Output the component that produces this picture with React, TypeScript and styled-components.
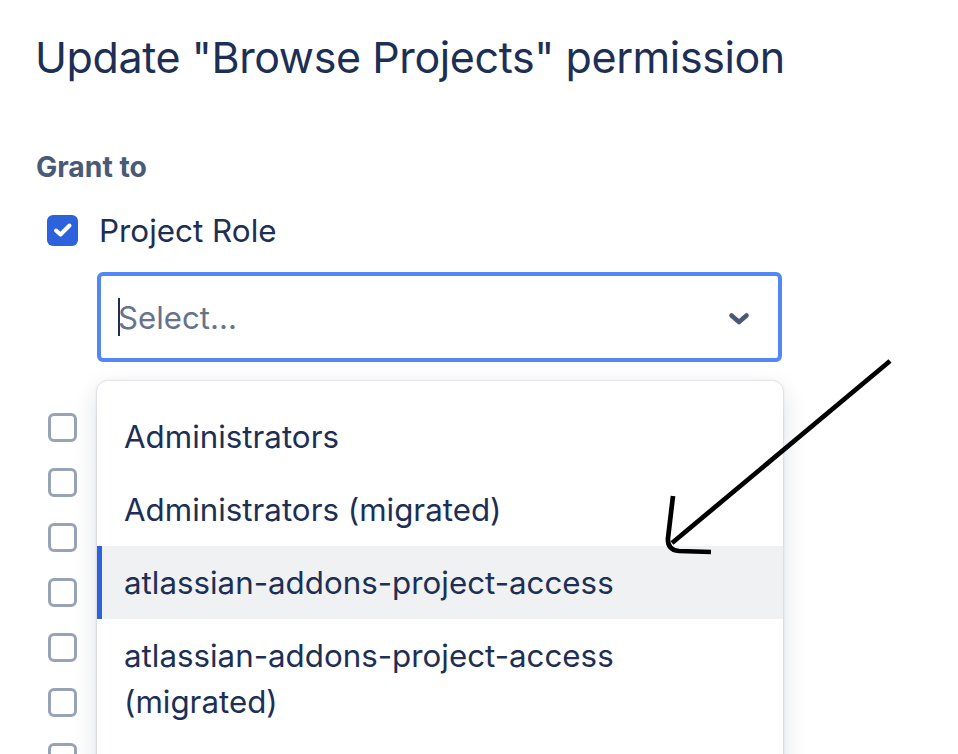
import styled, { createGlobalStyle } from "styled-components";

const GlobalStyle = createGlobalStyle`
  html, body {
    margin: 0;
    padding: 0;
    background: #fff;
  }
`;

const roles = [
  { name: "Administrators" },
  { name: "Administrators (migrated)" },
  { name: "atlassian-addons-project-access", active: true },
  { name: "atlassian-addons-project-access (migrated)" },
];

const uncheckedRows = [0, 1, 2, 3, 4, 5, 6];

export default function App() {
  return (
    <>
      <GlobalStyle />
      <Page>
        <Title>Update "Browse Projects" permission</Title>
        <Label>Grant to</Label>
        <CheckRow>
          <CheckedBox>
            <svg width="20" height="16" viewBox="0 0 20 16" fill="none">
              <path d="M3 8.5 L7.5 12.5 L16.5 3.5" stroke="#fff" strokeWidth="4" strokeLinecap="round" strokeLinejoin="round" />
            </svg>
          </CheckedBox>
          <CheckLabel>Project Role</CheckLabel>
        </CheckRow>
        <SelectBox>
          <Caret />
          <Placeholder>Select...</Placeholder>
          <Chevron width="22" height="14" viewBox="0 0 22 14" fill="none">
            <path d="M3.5 3.5 L11 10 L18.5 3.5" stroke="#4a5a76" strokeWidth="4.6" strokeLinecap="round" strokeLinejoin="round" />
          </Chevron>
        </SelectBox>
        <CheckList>
          {uncheckedRows.map((row) => (
            <EmptyBox key={row} />
          ))}
        </CheckList>
        <Menu>
          {roles.map((role) => (
            <MenuItem key={role.name} $active={role.active}>
              {role.name}
            </MenuItem>
          ))}
        </Menu>
        <Arrow width="958" height="754" viewBox="0 0 958 754" fill="none">
          <path d="M890 361 L672 543" stroke="#000" strokeWidth="4.7" />
          <path d="M673 496 L668 538 Q667 550 679 551 L711 552" stroke="#000" strokeWidth="4.7" />
        </Arrow>
      </Page>
    </>
  );
}

const Page = styled.div`
  position: relative;
  width: 958px;
  height: 754px;
  overflow: hidden;
  padding: 26px 0 0 35px;
  box-sizing: border-box;
  background: #fff;
  font-family: Inter, "Liberation Sans", sans-serif;
`;

const Title = styled.h1`
  margin: 0;
  color: #1d2f54;
  font-size: 43px;
  font-weight: 400;
  line-height: 62px;
  letter-spacing: -0.4px;
`;

const Label = styled.div`
  margin: 60px 0 0 1px;
  color: #4a5a76;
  font-size: 28.3px;
  font-weight: 700;
  line-height: 38px;
`;

const CheckRow = styled.div`
  display: flex;
  align-items: center;
  gap: 21px;
  margin: 21px 0 0 12px;
  height: 46px;
`;

const CheckedBox = styled.div`
  display: flex;
  align-items: center;
  justify-content: center;
  width: 31px;
  height: 31px;
  border-radius: 6px;
  background: #2c62dc;
`;

const CheckLabel = styled.span`
  padding-top: 2px;
  color: #1d2f54;
  font-size: 31.4px;
  line-height: 46px;
`;

const SelectBox = styled.div`
  display: flex;
  align-items: center;
  box-sizing: border-box;
  width: 685px;
  height: 90px;
  margin: 19px 0 0 62px;
  padding: 0 28px 0 17px;
  border: 4px solid #5288f5;
  border-radius: 6px;
  background: #fff;
`;

const Caret = styled.div`
  width: 2px;
  height: 38px;
  margin-right: -2px;
  background: #1d2f54;
`;

const Placeholder = styled.span`
  flex: 1;
  padding-top: 2px;
  color: #66738c;
  font-size: 31.2px;
  line-height: 46px;
`;

const Chevron = styled.svg`
  margin-top: 3px;
`;

const CheckList = styled.div`
  display: flex;
  flex-direction: column;
  gap: 26px;
  margin: 51px 0 0 13px;
`;

const EmptyBox = styled.div`
  box-sizing: border-box;
  width: 29px;
  height: 29px;
  border: 3px solid #98a3b5;
  border-radius: 6px;
  background: #fff;
`;

const Menu = styled.div`
  position: absolute;
  left: 97px;
  top: 381px;
  box-sizing: border-box;
  width: 686px;
  height: 420px;
  padding-top: 19px;
  border-radius: 10px;
  background: #fff;
  box-shadow: 0 0 2px rgba(9, 30, 66, 0.3), 0 8px 24px rgba(9, 30, 66, 0.14);
`;

const MenuItem = styled.div<{ $active?: boolean }>`
  box-sizing: border-box;
  padding: 14px 60px 13px 22px;
  color: #1d2f54;
  font-size: 31.3px;
  line-height: 46px;
  background: ${(p) => (p.$active ? "#f0f1f3" : "transparent")};
  border-left: 5px solid ${(p) => (p.$active ? "#2c62dc" : "transparent")};
`;

const Arrow = styled.svg`
  position: absolute;
  left: 0;
  top: 0;
  pointer-events: none;
`;
